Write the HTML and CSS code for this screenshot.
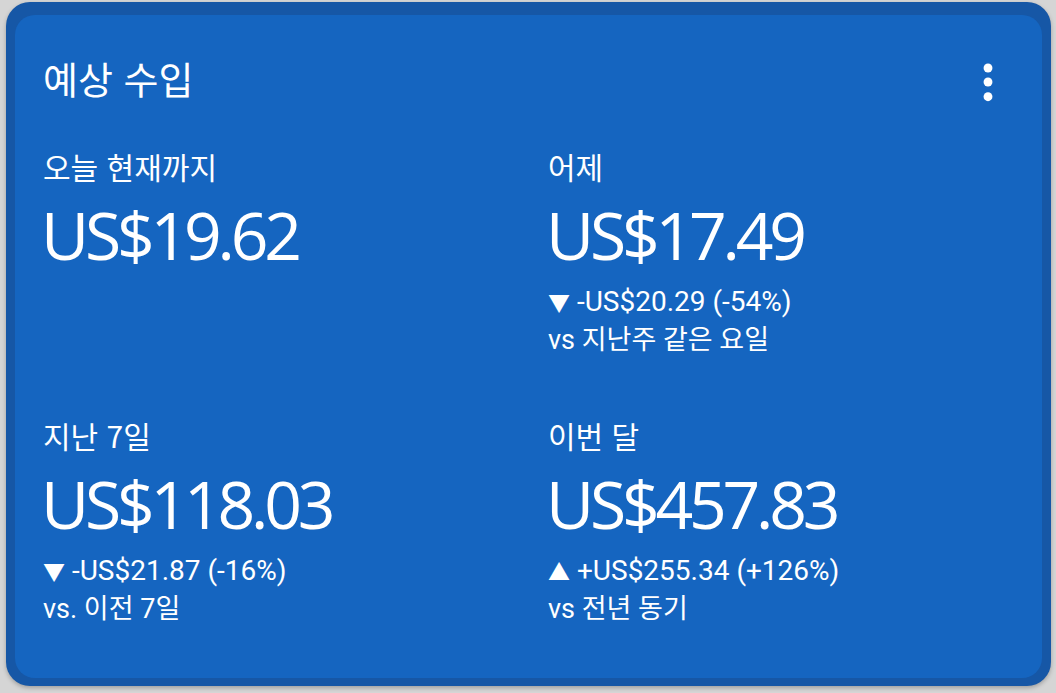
FILE: index.html
```html
<!DOCTYPE html>
<html lang="ko">
<head>
<meta charset="utf-8"/>
<meta content="width=device-width, initial-scale=1.0" name="viewport"/>
<title>예상 수입</title>
<link rel="stylesheet" href="styles.css">
</head>
<body>
<div class="card">
  <div class="card-inner">
    <div class="card-header">
      <h1>예상 수입</h1>
      <button class="menu-btn" aria-label="더보기">
        <svg width="56" height="56" viewBox="0 0 24 24" fill="#ffffff"><circle cx="12" cy="6" r="1.9"/><circle cx="12" cy="12" r="1.9"/><circle cx="12" cy="18.3" r="1.9"/></svg>
      </button>
    </div>
    <div class="stats">
      <div class="stat">
        <div class="stat-label">오늘 현재까지</div>
        <div class="stat-value">US$19.62</div>
      </div>
      <div class="stat">
        <div class="stat-label">어제</div>
        <div class="stat-value">US$17.49</div>
        <div class="stat-change"><span class="arrow">▼</span> -US$20.29 (-54%)</div>
        <div class="stat-compare">vs 지난주 같은 요일</div>
      </div>
      <div class="stat">
        <div class="stat-label">지난 7일</div>
        <div class="stat-value">US$118.03</div>
        <div class="stat-change"><span class="arrow">▼</span> -US$21.87 (-16%)</div>
        <div class="stat-compare">vs. 이전 7일</div>
      </div>
      <div class="stat">
        <div class="stat-label">이번 달</div>
        <div class="stat-value">US$457.83</div>
        <div class="stat-change"><span class="arrow">▲</span> +US$255.34 (+126%)</div>
        <div class="stat-compare">vs 전년 동기</div>
      </div>
    </div>
  </div>
</div>
</body>
</html>
```

FILE: styles.css
```css
:root {
  --page: #d5d5d5;
  --edge: #1657a6;
  --card: #1565c0;
  --fg: #ffffff;
}
body {
  margin: 0;
  background-color: var(--page);
  font-family: "Noto Sans CJK KR", "Noto Sans", sans-serif;
  color: var(--fg);
}
.card {
  margin: 2px 5px 6px 6px;
  padding: 13px 9px 8px 9px;
  background-color: var(--edge);
  border-radius: 24px;
  box-shadow: 0 2px 4px rgba(0, 0, 0, 0.25);
}
.card-inner {
  height: 663px;
  box-sizing: border-box;
  padding: 0 26px 0 28px;
  background-color: var(--card);
  border-radius: 20px;
}
.card-header {
  display: flex;
  align-items: center;
  justify-content: space-between;
  padding-top: 39px;
}
h1 {
  margin: 0 0 8px;
  font-size: 38px;
  font-weight: 400;
  line-height: 48px;
}
.menu-btn {
  width: 56px;
  height: 56px;
  padding: 0;
  border: none;
  background: none;
  cursor: pointer;
}
.menu-btn svg {
  display: block;
}
.stats {
  display: grid;
  grid-template-columns: 505px 1fr;
  grid-auto-rows: 269px;
  margin-top: 38px;
}
.stat-label {
  font-size: 30px;
  line-height: 36px;
}
.stat-value {
  font-family: "Open Sans", sans-serif;
  letter-spacing: -4.2px;
  font-size: 66px;
  line-height: 80px;
  margin: 10px 0 0 -2px;
}
.stat-change,
.stat-compare {
  font-family: Roboto, "Noto Sans CJK KR", sans-serif;
  font-size: 27px;
  line-height: 37px;
}
.stat-change {
  margin-top: 9px;
  font-size: 28px;
}
.arrow {
  font-size: 22px;
}
```
